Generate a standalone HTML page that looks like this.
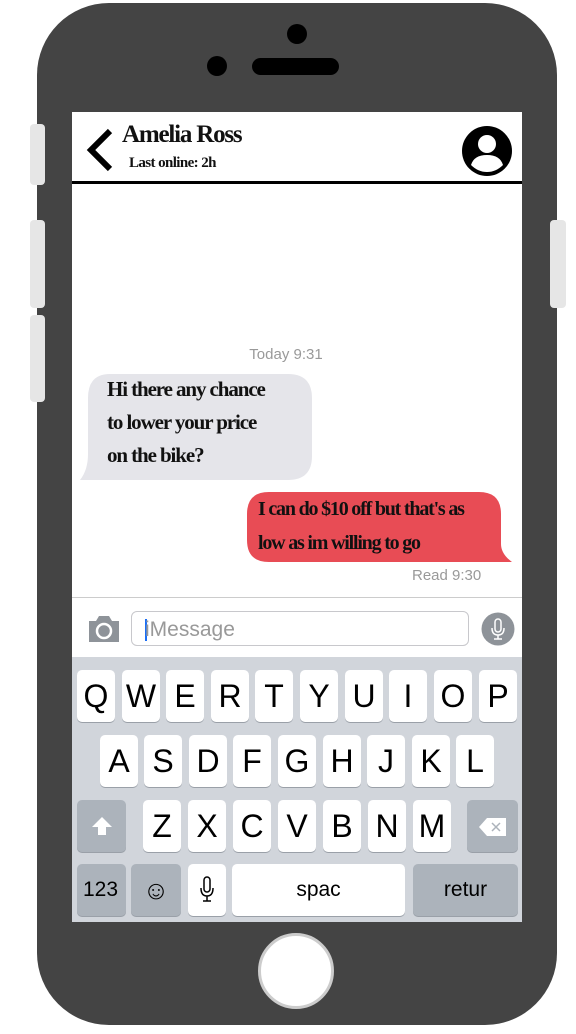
<!DOCTYPE html>
<html><head><meta charset="utf-8"><style>
*{margin:0;padding:0;box-sizing:border-box}
body{width:576px;height:1034px;background:#fff;position:relative;overflow:hidden;font-family:"Liberation Sans",sans-serif}
.a{position:absolute}
.phone{left:37px;top:3px;width:520px;height:1022px;background:#444;border-radius:72px}
.btn{background:#e6e6e6;border-radius:4px}
.screen{left:72px;top:112px;width:450px;height:810px;background:#fff;overflow:hidden}
.fan{font-family:"Liberation Serif",serif;font-weight:bold;color:#111;white-space:nowrap}
.k{position:absolute;background:#fff;border-radius:5px;font-size:32px;color:#000;text-align:center;line-height:52px;height:52px;width:38px;box-shadow:0 1px 0 #9aa0a8;overflow:hidden}
.g{background:#acb3bb}
</style></head><body>
<div class="a phone"></div>
<div class="a btn" style="left:30px;top:124px;width:15px;height:61px"></div>
<div class="a btn" style="left:30px;top:220px;width:15px;height:88px"></div>
<div class="a btn" style="left:30px;top:315px;width:15px;height:87px"></div>
<div class="a btn" style="left:550px;top:220px;width:16px;height:88px"></div>
<div class="a" style="left:287px;top:24px;width:20px;height:20px;border-radius:50%;background:#000"></div>
<div class="a" style="left:207px;top:56px;width:20px;height:20px;border-radius:50%;background:#000"></div>
<div class="a" style="left:252px;top:58px;width:87px;height:17px;border-radius:9px;background:#000"></div>
<div class="a" style="left:258px;top:933px;width:76px;height:76px;border-radius:50%;background:#fff;border:3px solid #ccc"></div>

<div class="a screen">
  <svg class="a" style="left:12px;top:15px" width="30" height="46" viewBox="0 0 30 46"><path d="M26 4 L7 23 L26 42" fill="none" stroke="#000" stroke-width="6"/></svg>
  <div class="a fan" style="left:50px;top:9px;font-size:25px;letter-spacing:-1.2px">Amelia Ross</div>
  <div class="a fan" style="left:57px;top:43px;font-size:15px;letter-spacing:-0.6px">Last online: 2h</div>
  <svg class="a" style="left:389px;top:13px" width="52" height="52" viewBox="0 0 52 52"><circle cx="26" cy="26" r="25" fill="#000"/><circle cx="26" cy="19" r="9" fill="#fff"/><path d="M10 40 Q13 30 26 30 Q39 30 42 40 Q35 47 26 47 Q17 47 10 40Z" fill="#fff"/></svg>
  <div class="a" style="left:0;top:69px;width:450px;height:3px;background:#000"></div>

  <div class="a" style="left:0;top:234px;width:428px;text-align:center;font-size:15px;color:#999">Today 9:31</div>
  <svg class="a" style="left:8px;top:262px" width="234" height="108"><path d="M30 0 H208 Q232 0 232 24 V82 Q232 106 208 106 H24 Q10 106 0 106 Q8 96 8 80 V24 Q8 0 30 0Z" fill="#e5e5ea"/></svg>
  <div class="a fan" style="left:35px;top:261px;font-size:21px;line-height:33px;letter-spacing:-1.1px">Hi there any chance<br>to lower your price<br>on the bike?</div>
  <svg class="a" style="left:175px;top:380px" width="265" height="71"><path d="M22 0 H232 Q254 0 254 22 V52 Q254 62 265 70 Q245 70 236 70 H22 Q0 70 0 48 V22 Q0 0 22 0Z" fill="#e84c55"/></svg>
  <div class="a fan" style="left:186px;top:380px;font-size:20px;line-height:34px;letter-spacing:-1.2px">I can do $10 off but that's as<br>low as im willing to go</div>
  <div class="a" style="left:340px;top:455px;font-size:15px;color:#999">Read 9:30</div>

  <div class="a" style="left:0;top:485px;width:450px;height:1px;background:#ccc"></div>
  <svg class="a" style="left:15px;top:503px" width="34" height="28" viewBox="0 0 34 28"><path d="M2 6 H9 L12 1 H22 L25 6 H32 V27 H2Z" fill="#8e9399"/><circle cx="17" cy="16" r="7" fill="none" stroke="#fff" stroke-width="2.5"/></svg>
  <div class="a" style="left:59px;top:499px;width:338px;height:35px;border:1px solid #c8c8cc;border-radius:6px"></div>
  <div class="a" style="left:73px;top:507px;width:2px;height:22px;background:#1a6ef5"></div>
  <div class="a" style="left:73px;top:506px;font-size:21px;color:#999">iMessage</div>
  <svg class="a" style="left:409px;top:500px" width="34" height="34" viewBox="0 0 34 34"><circle cx="17" cy="17" r="16.5" fill="#8e9399"/><rect x="14" y="7" width="6" height="13" rx="3" fill="none" stroke="#fff" stroke-width="1.5"/><path d="M11 16 Q11 23 17 23 Q23 23 23 16 M17 23 V27 M13 27 H21" fill="none" stroke="#fff" stroke-width="1.5"/></svg>

  <div class="a" style="left:0;top:545px;width:450px;height:265px;background:#d1d5db">
    <div class="k" style="left:5px;top:13px">Q</div><div class="k" style="left:50px;top:13px">W</div><div class="k" style="left:94px;top:13px">E</div><div class="k" style="left:139px;top:13px">R</div><div class="k" style="left:183px;top:13px">T</div><div class="k" style="left:228px;top:13px">Y</div><div class="k" style="left:273px;top:13px">U</div><div class="k" style="left:317px;top:13px">I</div><div class="k" style="left:362px;top:13px">O</div><div class="k" style="left:407px;top:13px">P</div>
    <div class="k" style="left:28px;top:78px">A</div><div class="k" style="left:72px;top:78px">S</div><div class="k" style="left:117px;top:78px">D</div><div class="k" style="left:161px;top:78px">F</div><div class="k" style="left:206px;top:78px">G</div><div class="k" style="left:251px;top:78px">H</div><div class="k" style="left:295px;top:78px">J</div><div class="k" style="left:340px;top:78px">K</div><div class="k" style="left:384px;top:78px">L</div>
    <div class="k g" style="left:5px;top:143px;width:49px"><svg width="24" height="22" viewBox="0 0 24 22" style="margin-top:15px"><path d="M12 2 L22 12 H16 V20 H8 V12 H2Z" fill="#fff"/></svg></div>
    <div class="k" style="left:71px;top:143px">Z</div><div class="k" style="left:116px;top:143px">X</div><div class="k" style="left:161px;top:143px">C</div><div class="k" style="left:206px;top:143px">V</div><div class="k" style="left:251px;top:143px">B</div><div class="k" style="left:296px;top:143px">N</div><div class="k" style="left:341px;top:143px">M</div>
    <div class="k g" style="left:395px;top:143px;width:51px"><svg width="30" height="20" viewBox="0 0 30 20" style="margin-top:16px"><path d="M9 1 H28 V19 H9 L1 10Z" fill="#fff"/><path d="M14 6 L22 14 M22 6 L14 14" stroke="#acb3bb" stroke-width="1.5"/></svg></div>
    <div class="k g" style="left:5px;top:207px;width:49px;font-size:21px;text-align:left;padding-left:6px">123</div>
    <div class="k g" style="left:59px;top:207px;width:50px;font-size:26px">☺</div>
    <div class="k" style="left:116px;top:207px"><svg width="16" height="28" viewBox="0 0 16 28" style="margin-top:12px"><rect x="5" y="1" width="6" height="15" rx="3" fill="none" stroke="#000" stroke-width="1.5"/><path d="M2 12 Q2 20 8 20 Q14 20 14 12 M8 20 V25 M4 25 H12" fill="none" stroke="#000" stroke-width="1.5"/></svg></div>
    <div class="k" style="left:160px;top:207px;width:173px;font-size:21px">spac</div>
    <div class="k g" style="left:341px;top:207px;width:105px;font-size:21px">retur</div>
  </div>
</div>
</body></html>
